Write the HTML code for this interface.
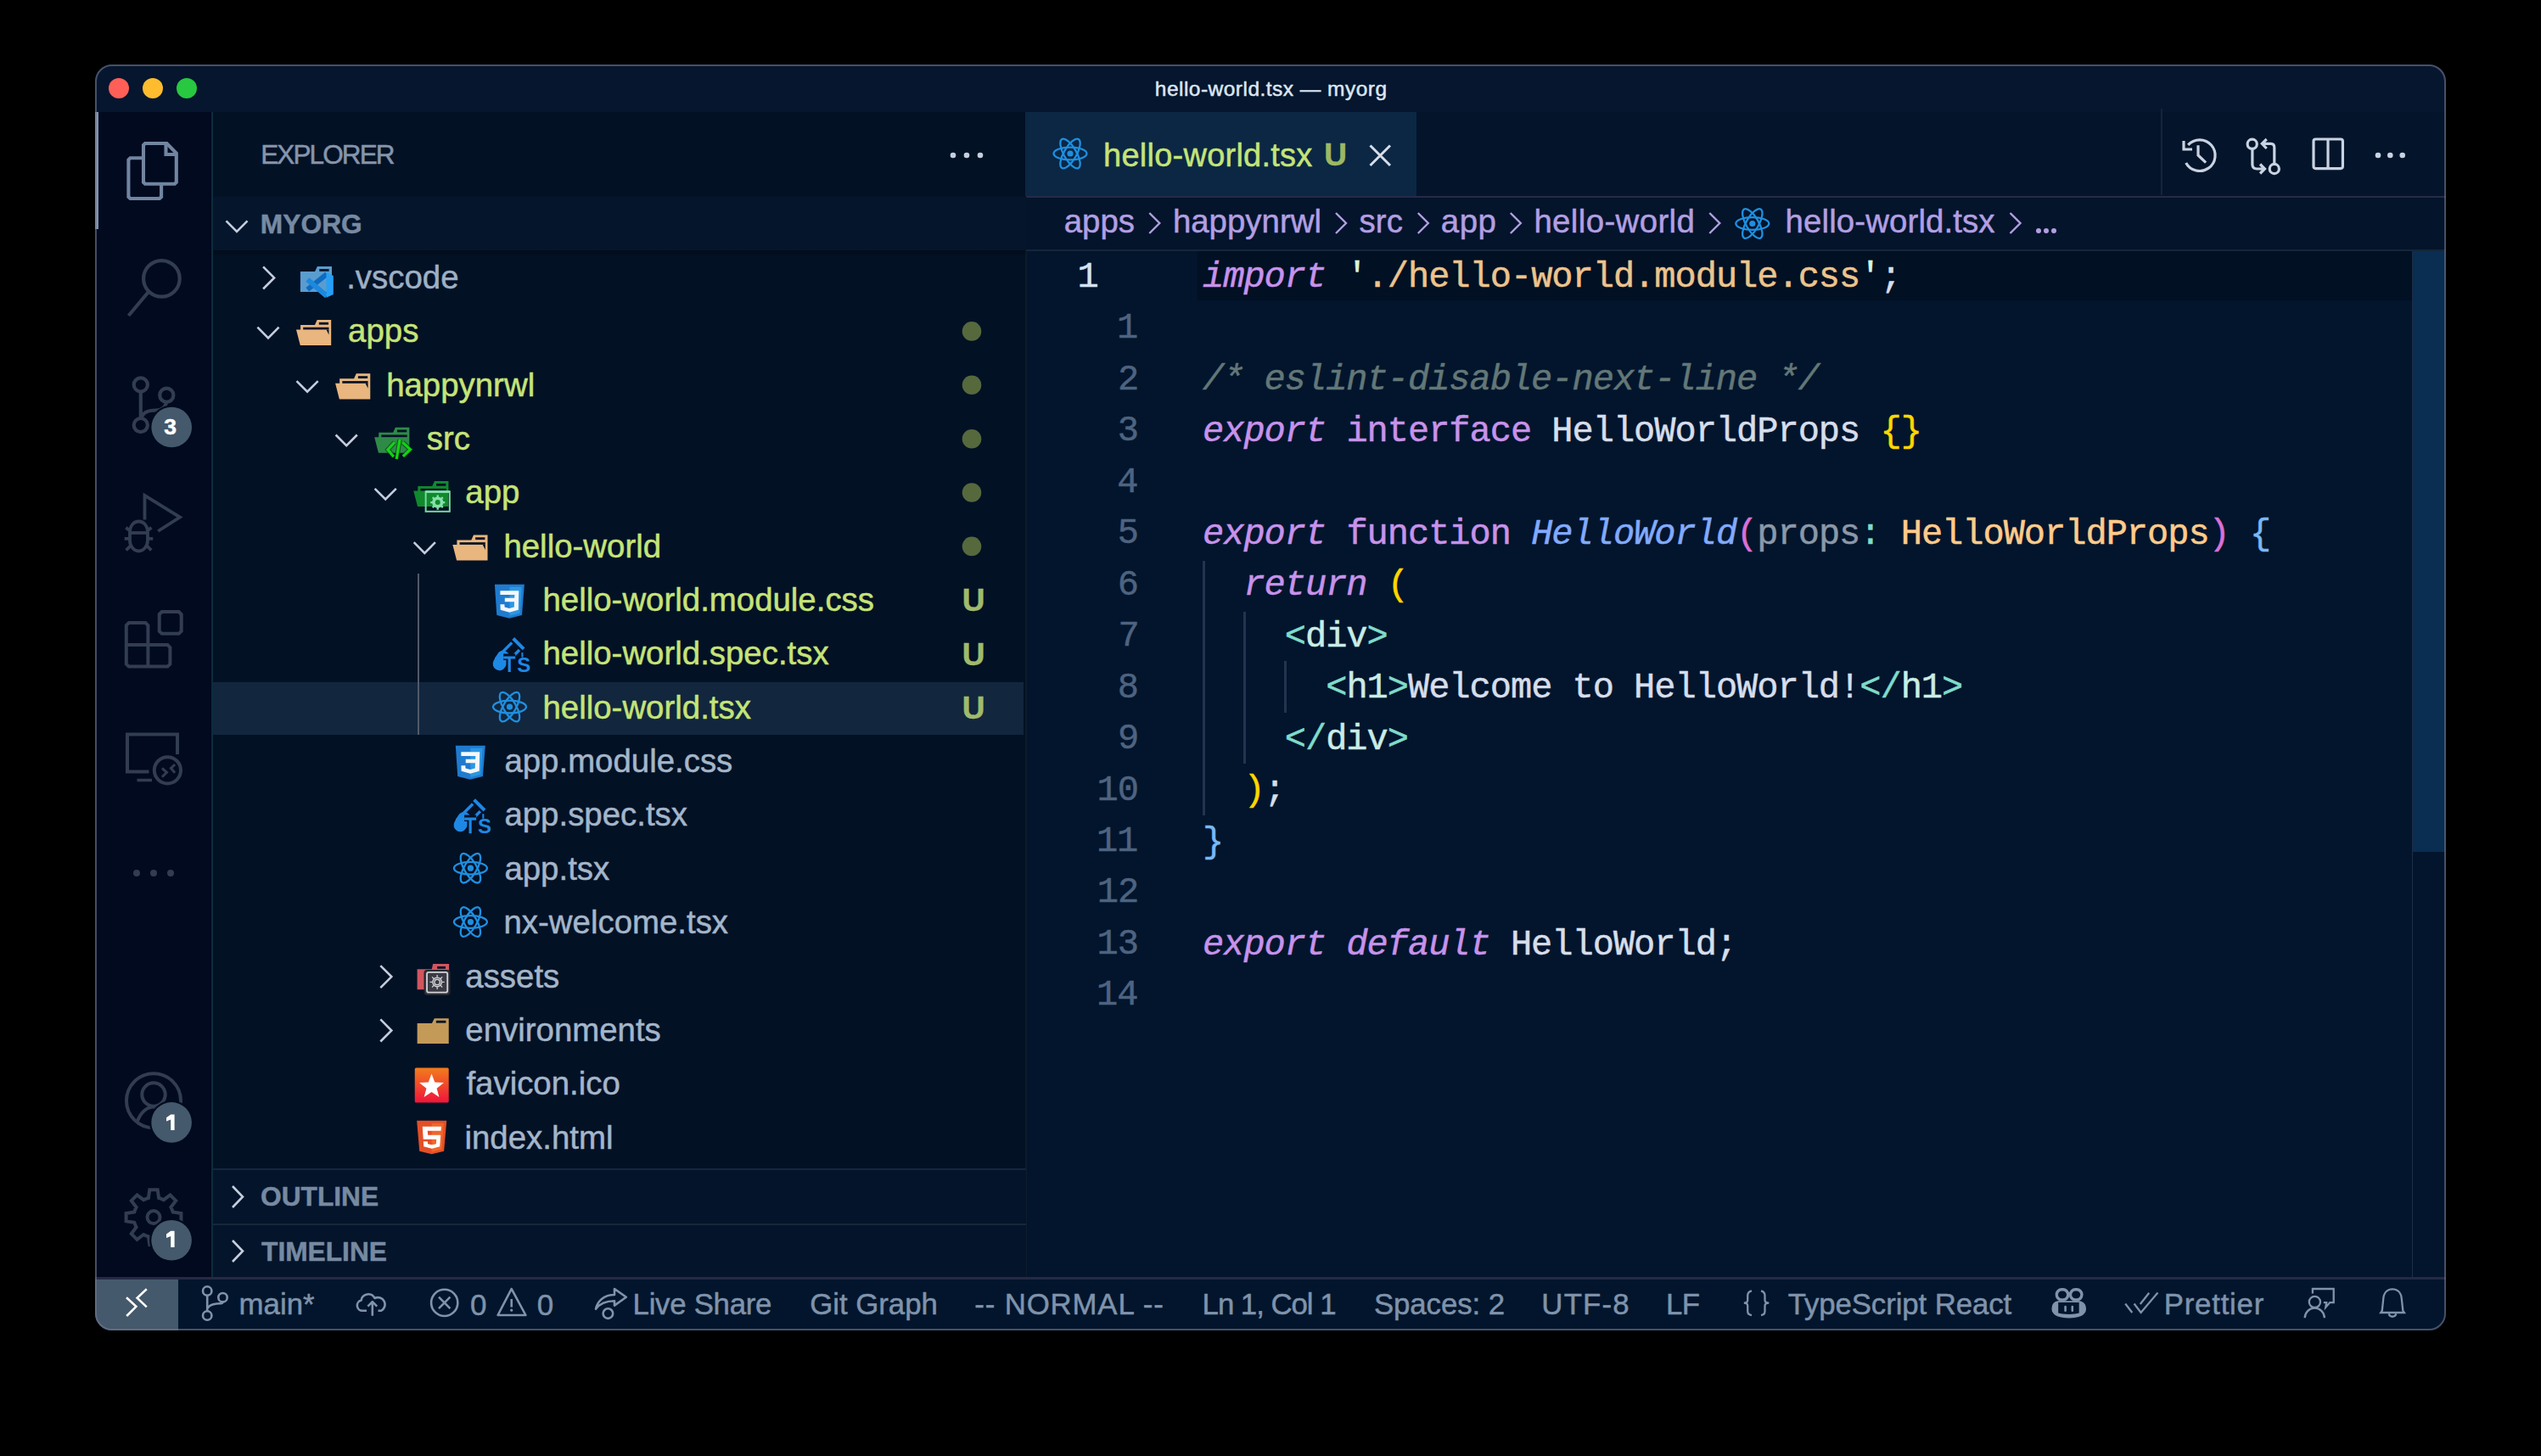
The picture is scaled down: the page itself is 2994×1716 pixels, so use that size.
<!DOCTYPE html><html><head><meta charset="utf-8"><style>html,body{margin:0;padding:0;background:#000;width:2994px;height:1716px;overflow:hidden}.t{position:absolute;white-space:pre;line-height:1;-webkit-text-stroke:0.5px currentColor}</style></head><body>
<div id="win" style="position:absolute;left:112px;top:76px;width:2770px;height:1492px;border-radius:20px;overflow:hidden;background:#011627">
<div style="position:absolute;left:-112px;top:-76px;width:2994px;height:1716px">
<div style="position:absolute;left:112.00px;top:76.00px;width:2770.00px;height:56.00px;background:#05162e;"></div>
<div style="position:absolute;left:112.00px;top:132.00px;width:137.00px;height:1374.00px;background:#010a1f;"></div>
<div style="position:absolute;left:249.00px;top:132.00px;width:2.00px;height:1374.00px;background:#0c2c3c;"></div>
<div style="position:absolute;left:112.00px;top:132.00px;width:4.00px;height:138.00px;background:#8194ad;"></div>
<div style="position:absolute;left:251.00px;top:132.00px;width:958.00px;height:1374.00px;background:#031125;"></div>
<div style="position:absolute;left:1209.00px;top:132.00px;width:1673.00px;height:1374.00px;background:#02152c;"></div>
<div style="position:absolute;left:1209.00px;top:132.00px;width:1673.00px;height:99.00px;background:#04142b;"></div>
<div style="position:absolute;left:1208.00px;top:132.00px;width:461.00px;height:99.00px;background:#0b2744;"></div>
<div style="position:absolute;left:1209.00px;top:231.00px;width:1673.00px;height:2.00px;background:#272b45;"></div>
<div style="position:absolute;left:2546.00px;top:128.00px;width:1.50px;height:102.00px;background:#14243a;"></div>
<div style="position:absolute;left:1208.00px;top:232.00px;width:1.50px;height:1274.00px;background:#0c1c2c;"></div>
<div style="position:absolute;left:1209.00px;top:233.00px;width:1673.00px;height:62.00px;background:#03142b;"></div>
<div style="position:absolute;left:1209.00px;top:294.00px;width:1673.00px;height:2.00px;background:#142638;"></div>
<div style="position:absolute;left:1411.00px;top:296.00px;width:1431.00px;height:58.00px;background:rgba(0,0,0,0.22);"></div>
<div style="position:absolute;left:2842.00px;top:296.00px;width:39.00px;height:708.00px;background:#0a2d52;"></div>
<div style="position:absolute;left:2841.50px;top:296.00px;width:1.50px;height:1209.00px;background:#1c2f45;"></div>
<div style="position:absolute;left:112.00px;top:1505.00px;width:2770.00px;height:63.00px;background:#02152c;"></div>
<div style="position:absolute;left:112.00px;top:1505.00px;width:2770.00px;height:3.00px;background:#252a44;"></div>
<div style="position:absolute;left:112.00px;top:1508.00px;width:98.00px;height:60.00px;background:#44596b;"></div>
<div style="position:absolute;left:251.00px;top:1377.00px;width:958.00px;height:2.00px;background:#13283a;"></div>
<div style="position:absolute;left:251.00px;top:1442.00px;width:958.00px;height:2.00px;background:#13283a;"></div>
<div style="position:absolute;left:251.00px;top:804.00px;width:955.00px;height:62.00px;background:#12263e;"></div>
<div style="position:absolute;left:251.00px;top:232.00px;width:958.00px;height:63.00px;background:#05152b;"></div>
<div style="position:absolute;left:251.00px;top:295.40px;width:958.00px;height:8.00px;background:linear-gradient(rgba(0,0,0,0.32),rgba(0,0,0,0));"></div>
<div style="position:absolute;left:251.00px;top:1379.00px;width:958.00px;height:63.00px;background:#04142a;"></div>
<div style="position:absolute;left:251.00px;top:1444.00px;width:958.00px;height:61.00px;background:#04142a;"></div>
<div class="t" style="left:1360.80px;top:92.86px;font-size:24.50px;color:#dde6f2;font-family:'Liberation Sans', sans-serif;font-weight:400;font-style:normal;letter-spacing:0.477px;">hello-world.tsx — myorg</div>
<div class="t" style="left:307.20px;top:167.34px;font-size:31.50px;color:#8596ab;font-family:'Liberation Sans', sans-serif;font-weight:400;font-style:normal;letter-spacing:-1.886px;">EXPLORER</div>
<div class="t" style="left:306.70px;top:249.18px;font-size:31.68px;color:#768aa2;font-family:'Liberation Sans', sans-serif;font-weight:700;font-style:normal;letter-spacing:0.100px;">MYORG</div>
<div class="t" style="left:408.20px;top:307.89px;font-size:38.40px;color:#9db0c4;font-family:'Liberation Sans', sans-serif;font-weight:400;font-style:normal;letter-spacing:0.000px;">.vscode</div>
<div class="t" style="left:410.10px;top:371.25px;font-size:38.40px;color:#c5e478;font-family:'Liberation Sans', sans-serif;font-weight:400;font-style:normal;letter-spacing:0.000px;">apps</div>
<div class="t" style="left:455.18px;top:434.61px;font-size:38.40px;color:#c5e478;font-family:'Liberation Sans', sans-serif;font-weight:400;font-style:normal;letter-spacing:0.000px;">happynrwl</div>
<div class="t" style="left:502.76px;top:497.97px;font-size:38.40px;color:#c5e478;font-family:'Liberation Sans', sans-serif;font-weight:400;font-style:normal;letter-spacing:0.000px;">src</div>
<div class="t" style="left:548.34px;top:561.33px;font-size:38.40px;color:#c5e478;font-family:'Liberation Sans', sans-serif;font-weight:400;font-style:normal;letter-spacing:0.000px;">app</div>
<div class="t" style="left:593.42px;top:624.69px;font-size:38.40px;color:#c5e478;font-family:'Liberation Sans', sans-serif;font-weight:400;font-style:normal;letter-spacing:0.000px;">hello-world</div>
<div class="t" style="left:639.50px;top:688.05px;font-size:38.40px;color:#c5e478;font-family:'Liberation Sans', sans-serif;font-weight:400;font-style:normal;letter-spacing:0.000px;">hello-world.module.css</div>
<div class="t" style="left:1133.80px;top:689.24px;font-size:37.00px;color:#a0bb6c;font-family:'Liberation Sans', sans-serif;font-weight:700;font-style:normal;letter-spacing:0.000px;">U</div>
<div class="t" style="left:639.50px;top:751.41px;font-size:38.40px;color:#c5e478;font-family:'Liberation Sans', sans-serif;font-weight:400;font-style:normal;letter-spacing:0.000px;">hello-world.spec.tsx</div>
<div class="t" style="left:1133.80px;top:752.60px;font-size:37.00px;color:#a0bb6c;font-family:'Liberation Sans', sans-serif;font-weight:700;font-style:normal;letter-spacing:0.000px;">U</div>
<div class="t" style="left:639.50px;top:814.77px;font-size:38.40px;color:#c5e478;font-family:'Liberation Sans', sans-serif;font-weight:400;font-style:normal;letter-spacing:0.000px;">hello-world.tsx</div>
<div class="t" style="left:1133.80px;top:815.96px;font-size:37.00px;color:#a0bb6c;font-family:'Liberation Sans', sans-serif;font-weight:700;font-style:normal;letter-spacing:0.000px;">U</div>
<div class="t" style="left:594.42px;top:878.13px;font-size:38.40px;color:#a3b6ca;font-family:'Liberation Sans', sans-serif;font-weight:400;font-style:normal;letter-spacing:0.000px;">app.module.css</div>
<div class="t" style="left:594.42px;top:941.49px;font-size:38.40px;color:#a3b6ca;font-family:'Liberation Sans', sans-serif;font-weight:400;font-style:normal;letter-spacing:0.000px;">app.spec.tsx</div>
<div class="t" style="left:594.42px;top:1004.85px;font-size:38.40px;color:#a3b6ca;font-family:'Liberation Sans', sans-serif;font-weight:400;font-style:normal;letter-spacing:0.000px;">app.tsx</div>
<div class="t" style="left:593.52px;top:1068.21px;font-size:38.40px;color:#a3b6ca;font-family:'Liberation Sans', sans-serif;font-weight:400;font-style:normal;letter-spacing:0.000px;">nx-welcome.tsx</div>
<div class="t" style="left:548.34px;top:1131.57px;font-size:38.40px;color:#a3b6ca;font-family:'Liberation Sans', sans-serif;font-weight:400;font-style:normal;letter-spacing:0.000px;">assets</div>
<div class="t" style="left:548.34px;top:1194.93px;font-size:38.40px;color:#a3b6ca;font-family:'Liberation Sans', sans-serif;font-weight:400;font-style:normal;letter-spacing:0.000px;">environments</div>
<div class="t" style="left:549.44px;top:1258.29px;font-size:38.40px;color:#a3b6ca;font-family:'Liberation Sans', sans-serif;font-weight:400;font-style:normal;letter-spacing:0.000px;">favicon.ico</div>
<div class="t" style="left:547.44px;top:1321.65px;font-size:38.40px;color:#a3b6ca;font-family:'Liberation Sans', sans-serif;font-weight:400;font-style:normal;letter-spacing:0.000px;">index.html</div>
<div style="position:absolute;left:491.50px;top:675.60px;width:2.00px;height:190.00px;background:#50596a;"></div>
<div class="t" style="left:307.10px;top:1395.18px;font-size:31.68px;color:#768aa2;font-family:'Liberation Sans', sans-serif;font-weight:700;font-style:normal;letter-spacing:0.000px;">OUTLINE</div>
<div class="t" style="left:308.10px;top:1459.68px;font-size:31.68px;color:#768aa2;font-family:'Liberation Sans', sans-serif;font-weight:700;font-style:normal;letter-spacing:0.000px;">TIMELINE</div>
<div class="t" style="left:1300.10px;top:163.63px;font-size:38.00px;color:#c5e478;font-family:'Liberation Sans', sans-serif;font-weight:400;font-style:normal;letter-spacing:0.236px;">hello-world.tsx</div>
<div class="t" style="left:1560.30px;top:164.48px;font-size:37.00px;color:#9db863;font-family:'Liberation Sans', sans-serif;font-weight:700;font-style:normal;letter-spacing:0.000px;">U</div>
<div class="t" style="left:1253.70px;top:242.39px;font-size:38.40px;color:#b29fe2;font-family:'Liberation Sans', sans-serif;font-weight:400;font-style:normal;letter-spacing:-0.000px;">apps</div>
<div class="t" style="left:1381.90px;top:242.39px;font-size:38.40px;color:#b29fe2;font-family:'Liberation Sans', sans-serif;font-weight:400;font-style:normal;letter-spacing:0.012px;">happynrwl</div>
<div class="t" style="left:1601.40px;top:242.39px;font-size:38.40px;color:#b29fe2;font-family:'Liberation Sans', sans-serif;font-weight:400;font-style:normal;letter-spacing:0.200px;">src</div>
<div class="t" style="left:1697.70px;top:242.39px;font-size:38.40px;color:#b29fe2;font-family:'Liberation Sans', sans-serif;font-weight:400;font-style:normal;letter-spacing:0.600px;">app</div>
<div class="t" style="left:1807.40px;top:242.39px;font-size:38.40px;color:#b29fe2;font-family:'Liberation Sans', sans-serif;font-weight:400;font-style:normal;letter-spacing:0.380px;">hello-world</div>
<div class="t" style="left:2103.60px;top:242.39px;font-size:38.40px;color:#b29fe2;font-family:'Liberation Sans', sans-serif;font-weight:400;font-style:normal;letter-spacing:0.114px;">hello-world.tsx</div>
<div class="t" style="left:1417.00px;top:306.41px;font-size:42.0px;font-family:'Liberation Mono', monospace;letter-spacing:-1.010px"><span style="color:#c792ea;font-style:italic;">import</span><span style="color:#d6deeb;"> </span><span style="color:#d9f5dd;">'</span><span style="color:#ecc48d;">./hello-world.module.css</span><span style="color:#d9f5dd;">'</span><span style="color:#d6deeb;">;</span></div>
<div class="t" style="left:1417.00px;top:427.37px;font-size:42.0px;font-family:'Liberation Mono', monospace;letter-spacing:-1.010px"><span style="color:#637777;font-style:italic;">/* eslint-disable-next-line */</span></div>
<div class="t" style="left:1417.00px;top:487.85px;font-size:42.0px;font-family:'Liberation Mono', monospace;letter-spacing:-1.010px"><span style="color:#c792ea;font-style:italic;">export</span><span style="color:#d6deeb;"> </span><span style="color:#c792ea;">interface</span><span style="color:#d6deeb;"> HelloWorldProps </span><span style="color:#ffd700;">{}</span></div>
<div class="t" style="left:1417.00px;top:608.81px;font-size:42.0px;font-family:'Liberation Mono', monospace;letter-spacing:-1.010px"><span style="color:#c792ea;font-style:italic;">export</span><span style="color:#d6deeb;"> </span><span style="color:#c792ea;">function</span><span style="color:#d6deeb;"> </span><span style="color:#82aaff;font-style:italic;">HelloWorld</span><span style="color:#da70d6;">(</span><span style="color:#8b98a8;">props</span><span style="color:#7fdbca;">:</span><span style="color:#d6deeb;"> </span><span style="color:#ffcb8b;">HelloWorldProps</span><span style="color:#da70d6;">)</span><span style="color:#d6deeb;"> </span><span style="color:#78b8f6;">{</span></div>
<div class="t" style="left:1417.00px;top:669.29px;font-size:42.0px;font-family:'Liberation Mono', monospace;letter-spacing:-1.010px"><span style="color:#d6deeb;">  </span><span style="color:#c792ea;font-style:italic;">return</span><span style="color:#d6deeb;"> </span><span style="color:#ffd700;">(</span></div>
<div class="t" style="left:1417.00px;top:729.77px;font-size:42.0px;font-family:'Liberation Mono', monospace;letter-spacing:-1.010px"><span style="color:#d6deeb;">    </span><span style="color:#7fdbca;">&lt;</span><span style="color:#caece6;">div</span><span style="color:#7fdbca;">&gt;</span></div>
<div class="t" style="left:1417.00px;top:790.25px;font-size:42.0px;font-family:'Liberation Mono', monospace;letter-spacing:-1.010px"><span style="color:#d6deeb;">      </span><span style="color:#7fdbca;">&lt;</span><span style="color:#caece6;">h1</span><span style="color:#7fdbca;">&gt;</span><span style="color:#d6deeb;">Welcome to HelloWorld!</span><span style="color:#7fdbca;">&lt;/</span><span style="color:#caece6;">h1</span><span style="color:#7fdbca;">&gt;</span></div>
<div class="t" style="left:1417.00px;top:850.73px;font-size:42.0px;font-family:'Liberation Mono', monospace;letter-spacing:-1.010px"><span style="color:#d6deeb;">    </span><span style="color:#7fdbca;">&lt;/</span><span style="color:#caece6;">div</span><span style="color:#7fdbca;">&gt;</span></div>
<div class="t" style="left:1417.00px;top:911.21px;font-size:42.0px;font-family:'Liberation Mono', monospace;letter-spacing:-1.010px"><span style="color:#d6deeb;">  </span><span style="color:#ffd700;">)</span><span style="color:#d6deeb;">;</span></div>
<div class="t" style="left:1417.00px;top:971.69px;font-size:42.0px;font-family:'Liberation Mono', monospace;letter-spacing:-1.010px"><span style="color:#78b8f6;">}</span></div>
<div class="t" style="left:1417.00px;top:1092.65px;font-size:42.0px;font-family:'Liberation Mono', monospace;letter-spacing:-1.010px"><span style="color:#c792ea;font-style:italic;">export</span><span style="color:#d6deeb;"> </span><span style="color:#c792ea;font-style:italic;">default</span><span style="color:#d6deeb;"> HelloWorld;</span></div>
<div class="t" style="left:1269.60px;top:305.71px;font-size:42.00px;color:#d6e2f2;font-family:'Liberation Mono', monospace;font-weight:400;font-style:normal;letter-spacing:-1.010px;">1</div>
<div class="t" style="left:1316.10px;top:366.19px;font-size:42.00px;color:#4e6380;font-family:'Liberation Mono', monospace;font-weight:400;font-style:normal;letter-spacing:-1.010px;">1</div>
<div class="t" style="left:1317.00px;top:426.67px;font-size:42.00px;color:#4e6380;font-family:'Liberation Mono', monospace;font-weight:400;font-style:normal;letter-spacing:-1.010px;">2</div>
<div class="t" style="left:1316.70px;top:487.15px;font-size:42.00px;color:#4e6380;font-family:'Liberation Mono', monospace;font-weight:400;font-style:normal;letter-spacing:-1.010px;">3</div>
<div class="t" style="left:1316.20px;top:547.63px;font-size:42.00px;color:#4e6380;font-family:'Liberation Mono', monospace;font-weight:400;font-style:normal;letter-spacing:-1.010px;">4</div>
<div class="t" style="left:1316.70px;top:608.11px;font-size:42.00px;color:#4e6380;font-family:'Liberation Mono', monospace;font-weight:400;font-style:normal;letter-spacing:-1.010px;">5</div>
<div class="t" style="left:1316.80px;top:668.59px;font-size:42.00px;color:#4e6380;font-family:'Liberation Mono', monospace;font-weight:400;font-style:normal;letter-spacing:-1.010px;">6</div>
<div class="t" style="left:1317.40px;top:729.07px;font-size:42.00px;color:#4e6380;font-family:'Liberation Mono', monospace;font-weight:400;font-style:normal;letter-spacing:-1.010px;">7</div>
<div class="t" style="left:1316.80px;top:789.55px;font-size:42.00px;color:#4e6380;font-family:'Liberation Mono', monospace;font-weight:400;font-style:normal;letter-spacing:-1.010px;">8</div>
<div class="t" style="left:1317.00px;top:850.03px;font-size:42.00px;color:#4e6380;font-family:'Liberation Mono', monospace;font-weight:400;font-style:normal;letter-spacing:-1.010px;">9</div>
<div class="t" style="left:1292.51px;top:910.51px;font-size:42.00px;color:#4e6380;font-family:'Liberation Mono', monospace;font-weight:400;font-style:normal;letter-spacing:-1.010px;">10</div>
<div class="t" style="left:1291.91px;top:970.99px;font-size:42.00px;color:#4e6380;font-family:'Liberation Mono', monospace;font-weight:400;font-style:normal;letter-spacing:-1.010px;">11</div>
<div class="t" style="left:1292.81px;top:1031.47px;font-size:42.00px;color:#4e6380;font-family:'Liberation Mono', monospace;font-weight:400;font-style:normal;letter-spacing:-1.010px;">12</div>
<div class="t" style="left:1292.51px;top:1091.95px;font-size:42.00px;color:#4e6380;font-family:'Liberation Mono', monospace;font-weight:400;font-style:normal;letter-spacing:-1.010px;">13</div>
<div class="t" style="left:1292.01px;top:1152.43px;font-size:42.00px;color:#4e6380;font-family:'Liberation Mono', monospace;font-weight:400;font-style:normal;letter-spacing:-1.010px;">14</div>
<div style="position:absolute;left:1416.50px;top:661.00px;width:3.00px;height:300.00px;background:#233350;"></div>
<div style="position:absolute;left:1464.90px;top:721.00px;width:3.00px;height:179.00px;background:#233350;"></div>
<div style="position:absolute;left:1513.20px;top:779.00px;width:3.00px;height:61.00px;background:#233350;"></div>
<div class="t" style="left:281.50px;top:1520.44px;font-size:34.80px;color:#7f93ab;font-family:'Liberation Sans', sans-serif;font-weight:400;font-style:normal;letter-spacing:0.025px;">main*</div>
<div class="t" style="left:553.90px;top:1520.47px;font-size:35.00px;color:#7f93ab;font-family:'Liberation Sans', sans-serif;font-weight:400;font-style:normal;letter-spacing:0.000px;">0</div>
<div class="t" style="left:632.80px;top:1520.47px;font-size:35.00px;color:#7f93ab;font-family:'Liberation Sans', sans-serif;font-weight:400;font-style:normal;letter-spacing:0.000px;">0</div>
<div class="t" style="left:745.60px;top:1520.44px;font-size:34.80px;color:#7f93ab;font-family:'Liberation Sans', sans-serif;font-weight:400;font-style:normal;letter-spacing:-0.289px;">Live Share</div>
<div class="t" style="left:954.30px;top:1520.44px;font-size:34.80px;color:#7f93ab;font-family:'Liberation Sans', sans-serif;font-weight:400;font-style:normal;letter-spacing:-0.038px;">Git Graph</div>
<div class="t" style="left:1148.30px;top:1520.44px;font-size:34.80px;color:#7f93ab;font-family:'Liberation Sans', sans-serif;font-weight:400;font-style:normal;letter-spacing:0.845px;">-- NORMAL --</div>
<div class="t" style="left:1416.60px;top:1520.44px;font-size:34.80px;color:#7f93ab;font-family:'Liberation Sans', sans-serif;font-weight:400;font-style:normal;letter-spacing:-1.040px;">Ln 1, Col 1</div>
<div class="t" style="left:1618.90px;top:1520.44px;font-size:34.80px;color:#7f93ab;font-family:'Liberation Sans', sans-serif;font-weight:400;font-style:normal;letter-spacing:-0.062px;">Spaces: 2</div>
<div class="t" style="left:1816.30px;top:1520.44px;font-size:34.80px;color:#7f93ab;font-family:'Liberation Sans', sans-serif;font-weight:400;font-style:normal;letter-spacing:1.200px;">UTF-8</div>
<div class="t" style="left:1963.00px;top:1520.44px;font-size:34.80px;color:#7f93ab;font-family:'Liberation Sans', sans-serif;font-weight:400;font-style:normal;letter-spacing:-0.700px;">LF</div>
<div class="t" style="left:2106.70px;top:1520.44px;font-size:34.80px;color:#7f93ab;font-family:'Liberation Sans', sans-serif;font-weight:400;font-style:normal;letter-spacing:-0.093px;">TypeScript React</div>
<div class="t" style="left:2549.80px;top:1520.44px;font-size:34.80px;color:#7f93ab;font-family:'Liberation Sans', sans-serif;font-weight:400;font-style:normal;letter-spacing:0.757px;">Prettier</div>
<svg style="position:absolute;left:0;top:0" width="2994" height="1716" viewBox="0 0 2994 1716"><circle cx="140" cy="104" r="12" fill="#ff5f57"/><circle cx="180" cy="104" r="12" fill="#febc2e"/><circle cx="220" cy="104" r="12" fill="#28c840"/><g fill="#c3cfdf"><circle cx="1123" cy="183" r="3.3"/><circle cx="1139" cy="183" r="3.3"/><circle cx="1155" cy="183" r="3.3"/></g><path d="M266.5,260.3 L279,272.8 L291.5,260.3" fill="none" stroke="#c3cfdf" stroke-width="2.6"/><path d="M310.1,314.4 L323.1,327.4 L310.1,340.5" fill="none" stroke="#c3cfdf" stroke-width="2.6"/><g transform="translate(349.00,327.08)"><path d="M4.9,-7 H22.1 L24.9,-13 H42 V16.9 H4.9 Z" fill="#5b9ccf"/><rect x="27.3" y="-10" width="11.3" height="2.7" fill="#031125"/><path d="M13.3,14.2 L36,-4" stroke="#0d6cc0" stroke-width="6" fill="none"/><path d="M13.3,2.4 L36,21.8" stroke="#1c88de" stroke-width="6" fill="none"/><path d="M35.5,-6 L43.8,-2.2 V19.8 L35.5,23.6 Z" fill="#25a0f6"/></g><path d="M303.4,385.7 L316.0,398.3 L328.6,385.7" fill="none" stroke="#c3cfdf" stroke-width="2.6"/><g transform="translate(349.00,391.44)"><path d="M5.1,-8.5 H22 L24.7,-14.5 H41.2 V15.6 H4.8 L0,-3 H5.1 Z" fill="#e8b67e"/><rect x="26.8" y="-11.6" width="11.3" height="2.8" fill="#031125"/><rect x="8.2" y="-5.7" width="30.3" height="2.7" fill="#031125"/><path d="M35.5,-3 H38.5 V3 Z" fill="#031125"/></g><circle cx="1145" cy="390.4" r="11.3" fill="#56693d"/><path d="M349.5,449.1 L362.1,461.7 L374.7,449.1" fill="none" stroke="#c3cfdf" stroke-width="2.6"/><g transform="translate(395.08,454.80)"><path d="M5.1,-8.5 H22 L24.7,-14.5 H41.2 V15.6 H4.8 L0,-3 H5.1 Z" fill="#e8b67e"/><rect x="26.8" y="-11.6" width="11.3" height="2.8" fill="#031125"/><rect x="8.2" y="-5.7" width="30.3" height="2.7" fill="#031125"/><path d="M35.5,-3 H38.5 V3 Z" fill="#031125"/></g><circle cx="1145" cy="453.8" r="11.3" fill="#56693d"/><path d="M395.6,512.5 L408.2,525.1 L420.8,512.5" fill="none" stroke="#c3cfdf" stroke-width="2.6"/><g transform="translate(441.16,518.16)"><path d="M5.1,-8.5 H22 L24.7,-14.5 H41.2 V15.6 H4.8 L0,-3 H5.1 Z" fill="#2f8a48"/><rect x="26.8" y="-11.6" width="11.3" height="2.8" fill="#031125"/><rect x="8.2" y="-5.7" width="30.3" height="2.7" fill="#031125"/><path d="M23.7,3.2 L15.8,11.8 L22.7,20.1 M29.9,-0.2 L26.1,22.8 M33.3,3.2 L42.3,11.5 L33.7,19.7" fill="none" stroke="#0a3a14" stroke-width="5.5" stroke-opacity="0.6"/><path d="M23.7,3.2 L15.8,11.8 L22.7,20.1 M29.9,-0.2 L26.1,22.8 M33.3,3.2 L42.3,11.5 L33.7,19.7" fill="none" stroke="#12d412" stroke-width="3.2"/></g><circle cx="1145" cy="517.2" r="11.3" fill="#56693d"/><path d="M441.6,575.8 L454.2,588.4 L466.8,575.8" fill="none" stroke="#c3cfdf" stroke-width="2.6"/><g transform="translate(487.24,581.52)"><path d="M5.1,-8.5 H22 L24.7,-14.5 H41.2 V15.6 H4.8 L0,-3 H5.1 Z" fill="#11892d"/><rect x="26.8" y="-11.6" width="11.3" height="2.8" fill="#031125"/><rect x="8.2" y="-5.7" width="30.3" height="2.7" fill="#031125"/><rect x="14.4" y="15.6" width="28.2" height="6.7" fill="#031125"/><rect x="14.4" y="-2.2" width="28.2" height="23.5" fill="none" stroke="#79d79c" stroke-width="2"/><rect x="14.4" y="-3.2" width="28.2" height="2.6" fill="#7fe3a6"/><path d="M34.60,8.07 L35.00,9.47 L37.02,9.42 L37.02,11.78 L35.00,11.73 L34.60,13.13 L33.90,14.40 L35.36,15.79 L33.69,17.46 L32.30,16.00 L31.03,16.70 L29.63,17.10 L29.68,19.12 L27.32,19.12 L27.37,17.10 L25.97,16.70 L24.70,16.00 L23.31,17.46 L21.64,15.79 L23.10,14.40 L22.40,13.13 L22.00,11.73 L19.98,11.78 L19.98,9.42 L22.00,9.47 L22.40,8.07 L23.10,6.80 L21.64,5.41 L23.31,3.74 L24.70,5.20 L25.97,4.50 L27.37,4.10 L27.32,2.08 L29.68,2.08 L29.63,4.10 L31.03,4.50 L32.30,5.20 L33.69,3.74 L35.36,5.41 L33.90,6.80 Z" fill="#86e0aa"/><circle cx="28.5" cy="10.6" r="3" fill="#11892d"/></g><circle cx="1145" cy="580.5" r="11.3" fill="#56693d"/><path d="M487.7,639.2 L500.3,651.8 L512.9,639.2" fill="none" stroke="#c3cfdf" stroke-width="2.6"/><g transform="translate(533.32,644.88)"><path d="M5.1,-8.5 H22 L24.7,-14.5 H41.2 V15.6 H4.8 L0,-3 H5.1 Z" fill="#e8b67e"/><rect x="26.8" y="-11.6" width="11.3" height="2.8" fill="#031125"/><rect x="8.2" y="-5.7" width="30.3" height="2.7" fill="#031125"/><path d="M35.5,-3 H38.5 V3 Z" fill="#031125"/></g><circle cx="1145" cy="643.9" r="11.3" fill="#56693d"/><g transform="translate(579.40,707.24)"><path d="M3.5,-18.5 H38.5 L35.6,17.7 L20.8,21.4 L5.9,17.7 Z" fill="#1f7bcf"/><path d="M21,-15.5 H35.4 L33,15.6 L21,18.6 Z" fill="#2b97e3"/><path d="M10,-11.1 H31.9 L31.4,11.5 L20.8,14.5 L10.3,11.5 L10.1,5 H15 L15.2,8.3 L20.8,9.8 L26.4,8.3 L26.6,2 H15.4 V-2.5 H26.8 L27,-6.2 H10 Z" fill="#f4f7fb"/></g><g transform="translate(579.40,770.60)"><path d="M25.3,-18.1 L37.7,-5.7" stroke="#1e88e5" stroke-width="4" fill="none"/><path d="M23.8,-13.2 L4.6,6" stroke="#1e88e5" stroke-width="3.4" fill="none"/><path d="M32.6,-4.6 L19,9" stroke="#1e88e5" stroke-width="3.4" fill="none"/><path d="M13.5,4 L9,11.8" stroke="#1e88e5" stroke-width="15.5" stroke-linecap="round" fill="none"/><path d="M13.8,3.6 H27.8 M20.8,3.6 V21.5" stroke="#031125" stroke-width="7.5" fill="none"/><path d="M13.8,4.4 H27.8 M20.8,4.4 V21.5" stroke="#1e88e5" stroke-width="3.2" fill="none"/><text x="29.8" y="21.3" font-family="Liberation Sans" font-weight="700" font-size="24" fill="#1e88e5" stroke="#031125" stroke-width="1.5" paint-order="stroke">S</text><path d="M36,-1.5 V4" stroke="#1e88e5" stroke-width="2"/></g><g transform="translate(600.50,833.11)" fill="none" stroke="#1f8fe0" stroke-width="2.3"><ellipse rx="19.5" ry="7.4"/><ellipse rx="19.5" ry="7.4" transform="rotate(60)"/><ellipse rx="19.5" ry="7.4" transform="rotate(120)"/><circle r="3.6" fill="#1f8fe0" stroke="none"/></g><g transform="translate(533.32,897.32)"><path d="M3.5,-18.5 H38.5 L35.6,17.7 L20.8,21.4 L5.9,17.7 Z" fill="#1f7bcf"/><path d="M21,-15.5 H35.4 L33,15.6 L21,18.6 Z" fill="#2b97e3"/><path d="M10,-11.1 H31.9 L31.4,11.5 L20.8,14.5 L10.3,11.5 L10.1,5 H15 L15.2,8.3 L20.8,9.8 L26.4,8.3 L26.6,2 H15.4 V-2.5 H26.8 L27,-6.2 H10 Z" fill="#f4f7fb"/></g><g transform="translate(533.32,960.68)"><path d="M25.3,-18.1 L37.7,-5.7" stroke="#1e88e5" stroke-width="4" fill="none"/><path d="M23.8,-13.2 L4.6,6" stroke="#1e88e5" stroke-width="3.4" fill="none"/><path d="M32.6,-4.6 L19,9" stroke="#1e88e5" stroke-width="3.4" fill="none"/><path d="M13.5,4 L9,11.8" stroke="#1e88e5" stroke-width="15.5" stroke-linecap="round" fill="none"/><path d="M13.8,3.6 H27.8 M20.8,3.6 V21.5" stroke="#031125" stroke-width="7.5" fill="none"/><path d="M13.8,4.4 H27.8 M20.8,4.4 V21.5" stroke="#1e88e5" stroke-width="3.2" fill="none"/><text x="29.8" y="21.3" font-family="Liberation Sans" font-weight="700" font-size="24" fill="#1e88e5" stroke="#031125" stroke-width="1.5" paint-order="stroke">S</text><path d="M36,-1.5 V4" stroke="#1e88e5" stroke-width="2"/></g><g transform="translate(554.42,1023.19)" fill="none" stroke="#1f8fe0" stroke-width="2.3"><ellipse rx="19.5" ry="7.4"/><ellipse rx="19.5" ry="7.4" transform="rotate(60)"/><ellipse rx="19.5" ry="7.4" transform="rotate(120)"/><circle r="3.6" fill="#1f8fe0" stroke="none"/></g><g transform="translate(554.42,1086.55)" fill="none" stroke="#1f8fe0" stroke-width="2.3"><ellipse rx="19.5" ry="7.4"/><ellipse rx="19.5" ry="7.4" transform="rotate(60)"/><ellipse rx="19.5" ry="7.4" transform="rotate(120)"/><circle r="3.6" fill="#1f8fe0" stroke="none"/></g><path d="M448.3,1138.1 L461.3,1151.1 L448.3,1164.2" fill="none" stroke="#c3cfdf" stroke-width="2.6"/><g transform="translate(487.24,1150.76)"><path d="M4.35,-8.5 H21.5 L22.9,-14.7 H41.9 V15.4 H4.35 Z" fill="#d2555f"/><rect x="27.9" y="-11.8" width="9.8" height="2.8" fill="#031125"/><rect x="13" y="-6.9" width="29.7" height="28.5" rx="3" fill="#3a3b44" stroke="#24262f" stroke-width="1.5"/><rect x="15.8" y="-4.9" width="24.2" height="23.8" rx="2.2" fill="none" stroke="#d4d4d8" stroke-width="1.8"/><path d="M33.44,4.40 L33.87,6.14 L36.48,6.05 L36.48,7.35 L33.87,7.26 L33.44,9.00 L32.52,10.52 L34.42,12.31 L33.51,13.22 L31.72,11.32 L30.20,12.24 L28.46,12.67 L28.55,15.28 L27.25,15.28 L27.34,12.67 L25.60,12.24 L24.08,11.32 L22.29,13.22 L21.38,12.31 L23.28,10.52 L22.36,9.00 L21.93,7.26 L19.32,7.35 L19.32,6.05 L21.93,6.14 L22.36,4.40 L23.28,2.88 L21.38,1.09 L22.29,0.18 L24.08,2.08 L25.60,1.16 L27.34,0.73 L27.25,-1.88 L28.55,-1.88 L28.46,0.73 L30.20,1.16 L31.72,2.08 L33.51,0.18 L34.42,1.09 L32.52,2.88 Z" fill="#d4d4d8"/><circle cx="27.9" cy="6.7" r="4.6" fill="#3a3b44"/><circle cx="27.9" cy="6.7" r="3.2" fill="none" stroke="#d4d4d8" stroke-width="1.4"/></g><path d="M448.3,1201.4 L461.3,1214.5 L448.3,1227.5" fill="none" stroke="#c3cfdf" stroke-width="2.6"/><g transform="translate(487.24,1214.12)"><path d="M4.4,-8 H21.7 L24.6,-13.8 H41.5 V15.9 H4.4 Z" fill="#c49a58"/><rect x="26.6" y="-11.3" width="11.6" height="2.8" fill="#031125"/></g><g transform="translate(487.24,1277.48)"><defs><linearGradient id="fav" x1="0" y1="0" x2="0" y2="1"><stop offset="0" stop-color="#f27c1c"/><stop offset="1" stop-color="#f0153b"/></linearGradient></defs><rect x="1.5" y="-18.9" width="40" height="40.8" rx="1.5" fill="url(#fav)"/><path d="M21.30,-12.00 L25.06,-1.98 L35.76,-1.50 L27.39,5.18 L30.23,15.50 L21.30,9.60 L12.37,15.50 L15.21,5.18 L6.84,-1.50 L17.54,-1.98 Z" fill="#ffffff"/></g><g transform="translate(487.24,1340.84)"><path d="M3.9,-20 H39 L35.9,15.8 L21.4,19.5 L7,15.8 Z" fill="#e44f26"/><path d="M21.4,-17 H35.6 L33.2,14 L21.4,17 Z" fill="#f1662a"/><path d="M10.5,-13 H32.8 L32.3,-8 H16.5 L17,-3 H32 L31,10.5 L21.7,13 L12,10.5 L11.6,4.5 H16.5 L16.8,7.3 L21.7,8.5 L26.6,7.3 L27,2 H11.5 Z" fill="#ffffff"/></g><path d="M274,1398 L286,1410.5 L274,1423" fill="none" stroke="#c3cfdf" stroke-width="2.6"/><path d="M274,1462 L286,1474.5 L274,1487" fill="none" stroke="#c3cfdf" stroke-width="2.6"/><path d="M1614.5,171.5 L1638,195 M1638,171.5 L1614.5,195" stroke="#d6deeb" stroke-width="3"/><path d="M1354.3,251.0 L1366.3,263.0 L1354.3,275.0" fill="none" stroke="#b29fe2" stroke-width="2.4"/><path d="M1574.0,251.0 L1586.0,263.0 L1574.0,275.0" fill="none" stroke="#b29fe2" stroke-width="2.4"/><path d="M1670.8,251.0 L1682.8,263.0 L1670.8,275.0" fill="none" stroke="#b29fe2" stroke-width="2.4"/><path d="M1779.8,251.0 L1791.8,263.0 L1779.8,275.0" fill="none" stroke="#b29fe2" stroke-width="2.4"/><path d="M2014.3,251.0 L2026.3,263.0 L2014.3,275.0" fill="none" stroke="#b29fe2" stroke-width="2.4"/><path d="M2368.5,251.0 L2380.5,263.0 L2368.5,275.0" fill="none" stroke="#b29fe2" stroke-width="2.4"/><g fill="#b29fe2"><circle cx="2402" cy="272" r="3"/><circle cx="2411" cy="272" r="3"/><circle cx="2420" cy="272" r="3"/></g><g fill="none" stroke="#7185a0" stroke-width="4.1" stroke-linejoin="miter"><path d="M169,171 L171,169 L196.5,169 L207.8,180.5 L207.8,214.8 L205.8,216.8 L171,216.8 L169,214.8 Z"/><path d="M195.5,169 V182 H208"/><path d="M169,186.3 H153.5 L151.4,188.4 V232 L153.5,234 H188 L190.1,232 V216.8"/></g><g fill="none" stroke="#323d52" stroke-width="4.2"><circle cx="190.4" cy="328.4" r="21.3"/><path d="M174.5,344.5 L151.5,372"/><circle cx="165.8" cy="453.4" r="8.1"/><circle cx="196.3" cy="465.7" r="8.1"/><circle cx="165.8" cy="501.1" r="8.1"/><path d="M165.8,461.5 V493"/><path d="M166.5,493 C168,486 176,483.5 184,483.5 C190,483.5 195,480 196,473.8"/></g><g fill="none" stroke="#323d52" stroke-width="3.8"><path d="M170.5,612.5 V584 L212,609.6 L186.2,626"/><path d="M153,628 C153,619 158,614.5 163.4,614.5 C169,614.5 174,619 174,628 V637 C174,644 169,649.5 163.4,649.5 C158,649.5 153,644 153,637 Z"/><path d="M153,628 H174"/><path d="M148.3,621.9 L153.5,625.6 M178.5,621.9 L173.3,625.6 M146.7,634.9 H153 M174,634.9 H180.3 M148.6,648.5 L154.2,642.9 M178.3,648.5 L172.7,642.9"/></g><g fill="none" stroke="#323d52" stroke-width="4"><path d="M187.7,724 L190.7,721 H210.7 L213.7,724 V743.8 L210.7,746.8 H190.7 L187.7,743.8 Z"/><path d="M148.8,759.9 V737 L151.8,733.9 H171.4 L174.4,737 V785.6 M148.8,759.9 H197.4 L200.4,763 V782.6 L197.4,785.6 H151.8 L148.8,782.6 Z"/></g><g fill="none" stroke="#323d52" stroke-width="4"><path d="M209,889 V865.5 H150 V909.5 H175.5"/><path d="M161.5,919.5 H179" stroke-width="3.5"/><circle cx="197.4" cy="907.8" r="15.6"/><path d="M190.9,905.3 L196.5,910.3 L190.9,915.8 M206.1,901 L201.4,905.3 L206.1,910.9" stroke-width="3"/></g><g fill="#323d52"><circle cx="161" cy="1029" r="4"/><circle cx="181" cy="1029" r="4"/><circle cx="201" cy="1029" r="4"/></g><g fill="none" stroke="#323d52" stroke-width="4"><circle cx="181" cy="1297.2" r="32"/><circle cx="181" cy="1290" r="13.7"/><path d="M161.7,1322 C166,1310 174,1304.5 181,1304.5 C188,1304.5 196,1310 200.3,1322"/></g><g fill="none" stroke="#323d52" stroke-width="4"><path d="M172.0,1412.9 L174.9,1411.9 L176.3,1402.2 L185.7,1402.2 L187.1,1411.9 L190.0,1412.9 L192.8,1414.2 L200.5,1408.4 L207.2,1415.1 L201.4,1422.8 L202.7,1425.6 L203.7,1428.5 L213.4,1429.9 L213.4,1439.3 L203.7,1440.7 L202.7,1443.6 L201.4,1446.3 L207.2,1454.1 L200.5,1460.8 L192.8,1455.0 L190.0,1456.3 L187.1,1457.3 L185.7,1467.0 L176.3,1467.0 L174.9,1457.3 L172.0,1456.3 L169.2,1455.0 L161.5,1460.8 L154.8,1454.1 L160.6,1446.3 L159.3,1443.6 L158.3,1440.7 L148.6,1439.3 L148.6,1429.9 L158.3,1428.5 L159.3,1425.6 L160.6,1422.8 L154.8,1415.1 L161.5,1408.4 L169.2,1414.2 Z"/><circle cx="181" cy="1434.6" r="7.5"/></g><circle cx="202.2" cy="503.5" r="26" fill="#010a1f"/><circle cx="202.2" cy="503.5" r="23.8" fill="#44596b"/><circle cx="202.1" cy="1322.9" r="26" fill="#010a1f"/><circle cx="202.1" cy="1322.9" r="23.8" fill="#44596b"/><circle cx="202.1" cy="1461.8" r="26" fill="#010a1f"/><circle cx="202.1" cy="1461.8" r="23.8" fill="#44596b"/><path d="M201.2,1313.4 H205.6 V1332 H201.2 V1319.6 L196,1321.6 V1317.2 Z" fill="#ffffff"/><path d="M201.2,1450.8 H205.6 V1470 H201.2 V1457 L196,1459 V1454.6 Z" fill="#ffffff"/><path d="M149,1529.2 L160.4,1539.8 L149.2,1551 M172.8,1519.2 L161.6,1529.8 L172.8,1540.4" fill="none" stroke="#ffffff" stroke-width="2.6"/><g fill="none" stroke="#7f93ab" stroke-width="2.6"><circle cx="244.2" cy="1521.5" r="5.2"/><circle cx="244.2" cy="1550.5" r="5.2"/><circle cx="262.5" cy="1529.2" r="5.2"/><path d="M244.2,1526.7 V1545.3"/><path d="M244.8,1542 C246,1537.5 252,1537 256,1536.5 C260,1536 262.5,1537 262.5,1534.4"/></g><g transform="translate(1261.00,181.00)" fill="none" stroke="#1f8fe0" stroke-width="2.3"><ellipse rx="19.5" ry="7.4"/><ellipse rx="19.5" ry="7.4" transform="rotate(60)"/><ellipse rx="19.5" ry="7.4" transform="rotate(120)"/><circle r="3.6" fill="#1f8fe0" stroke="none"/></g><g transform="translate(2064.80,263.50)" fill="none" stroke="#1f8fe0" stroke-width="2.3"><ellipse rx="19.5" ry="7.4"/><ellipse rx="19.5" ry="7.4" transform="rotate(60)"/><ellipse rx="19.5" ry="7.4" transform="rotate(120)"/><circle r="3.6" fill="#1f8fe0" stroke="none"/></g><g fill="none" stroke="#c8d3e1" stroke-width="3.2"><path d="M2575.7,191.9 A18.3,18.3 0 1 0 2578.2,170.9"/><path d="M2573,166 V176 H2583"/><path d="M2590,171.2 V183 L2599.1,191.6"/><circle cx="2653.7" cy="169.8" r="5.6"/><circle cx="2679.8" cy="199" r="5.6"/><path d="M2653.9,175.4 V194 Q2654.2,199 2659.2,199 H2668 M2663,193.5 L2668.5,199 L2663,204.5"/><path d="M2679.8,193.4 V174 Q2679.8,169.3 2675.7,169.3 H2665.8 M2670.7,164 L2665.3,169.3 L2670.7,175"/><rect x="2726" y="164" width="34.4" height="34.6" rx="2.5"/><path d="M2743,164 V198.6"/></g><g fill="#c8d3e1"><circle cx="2802" cy="183" r="3.3"/><circle cx="2816.3" cy="183" r="3.3"/><circle cx="2830.7" cy="183" r="3.3"/></g><g fill="none" stroke="#7f93ab" stroke-width="2.6" stroke-linejoin="round"><path d="M432,1544.8 H427 A6.2,6.2 0 0 1 425.5,1532.6 A8.5,8.5 0 0 1 441.5,1530 A6.5,6.5 0 0 1 449,1544.8 H445.5"/><path d="M438.8,1550.8 V1535.4 M433.4,1539.6 L438.8,1534.2 L444.2,1539.6"/><circle cx="523.7" cy="1535.4" r="15.6"/><path d="M517,1528.7 L530.4,1542.1 M530.4,1528.7 L517,1542.1"/><path d="M602.7,1519 L586.6,1550 H619.4 Z"/><path d="M602.7,1531 V1540.5"/><path d="M702,1542.8 C704,1533 712,1526 724,1526 V1519 L737.8,1528.7 L724,1538.6 V1533.3 C714,1533.3 707,1536 702,1542.8 Z"/><circle cx="716.4" cy="1548.1" r="5.8"/></g><circle cx="602.7" cy="1544.2" r="1.6" fill="#7f93ab"/><g fill="none" stroke="#7f93ab" stroke-width="2.3"><path d="M2064,1521.3 Q2059.2,1522.5 2059.2,1527 V1532.6 Q2059.2,1535.7 2054.8,1535.7 Q2059.2,1535.7 2059.2,1539 V1545.3 Q2059.2,1549.6 2064,1550.1"/><path d="M2075,1521.3 Q2079.5,1522.5 2079.5,1527 V1532.6 Q2079.5,1535.7 2084.3,1535.7 Q2079.5,1535.7 2079.5,1539 V1545.3 Q2079.5,1549.6 2075,1550.1"/></g><g fill="#7f93ab"><path d="M2417.5,1543 C2417.5,1536 2421,1533.5 2425,1533.2 H2450 C2454,1533.5 2458,1536 2458,1543 C2458,1550 2449,1553.5 2437.8,1553.5 C2426.5,1553.5 2417.5,1550 2417.5,1543 Z"/></g><path d="M2425.2,1535 H2449.7 V1547.6 C2445,1549.3 2430,1549.3 2425.2,1547.6 Z" fill="#02152c"/><g fill="none" stroke="#7f93ab" stroke-width="3.4"><rect x="2423.3" y="1519.8" width="13.4" height="12.2" rx="6"/><rect x="2439.5" y="1519.8" width="13.4" height="12.2" rx="6"/></g><g stroke="#7f93ab" stroke-width="2.6" stroke-linecap="round"><path d="M2433.6,1540 V1544.8 M2441.8,1540 V1544.8"/></g><g fill="none" stroke="#7f93ab" stroke-width="2.3"><path d="M2504.2,1536.5 L2512.3,1547 M2514.6,1536.5 L2522.6,1547 L2542.5,1523.5 M2521.8,1537 L2532.2,1523.8"/><circle cx="2727.4" cy="1534.4" r="6.6"/><path d="M2715.7,1553.3 A11.6,11.6 0 0 1 2738.9,1553.3"/><path d="M2724.9,1524.4 V1519 H2749.7 V1535.1 H2745.3 L2740.3,1540.7 L2741.2,1535.1 H2737.8"/><path d="M2805.2,1547 L2806.8,1544.5 L2808.3,1530 C2809,1523 2813.5,1519.3 2819,1519.3 C2824.5,1519.3 2829,1523 2829.7,1530 L2831.3,1544.5 L2832.9,1547 Z"/><path d="M2814.7,1548.3 A4.4,4.4 0 0 0 2823.3,1548.3"/></g></svg>
<div class="t" style="left:193.30px;top:489.97px;font-size:26.50px;color:#ffffff;font-family:'Liberation Sans', sans-serif;font-weight:700;font-style:normal;letter-spacing:0.000px;">3</div>
</div></div>
<div style="position:absolute;left:112px;top:76px;width:2770px;height:1492px;border-radius:20px;box-sizing:border-box;border:2px solid rgba(115,120,145,0.6);pointer-events:none"></div>
</body></html>
